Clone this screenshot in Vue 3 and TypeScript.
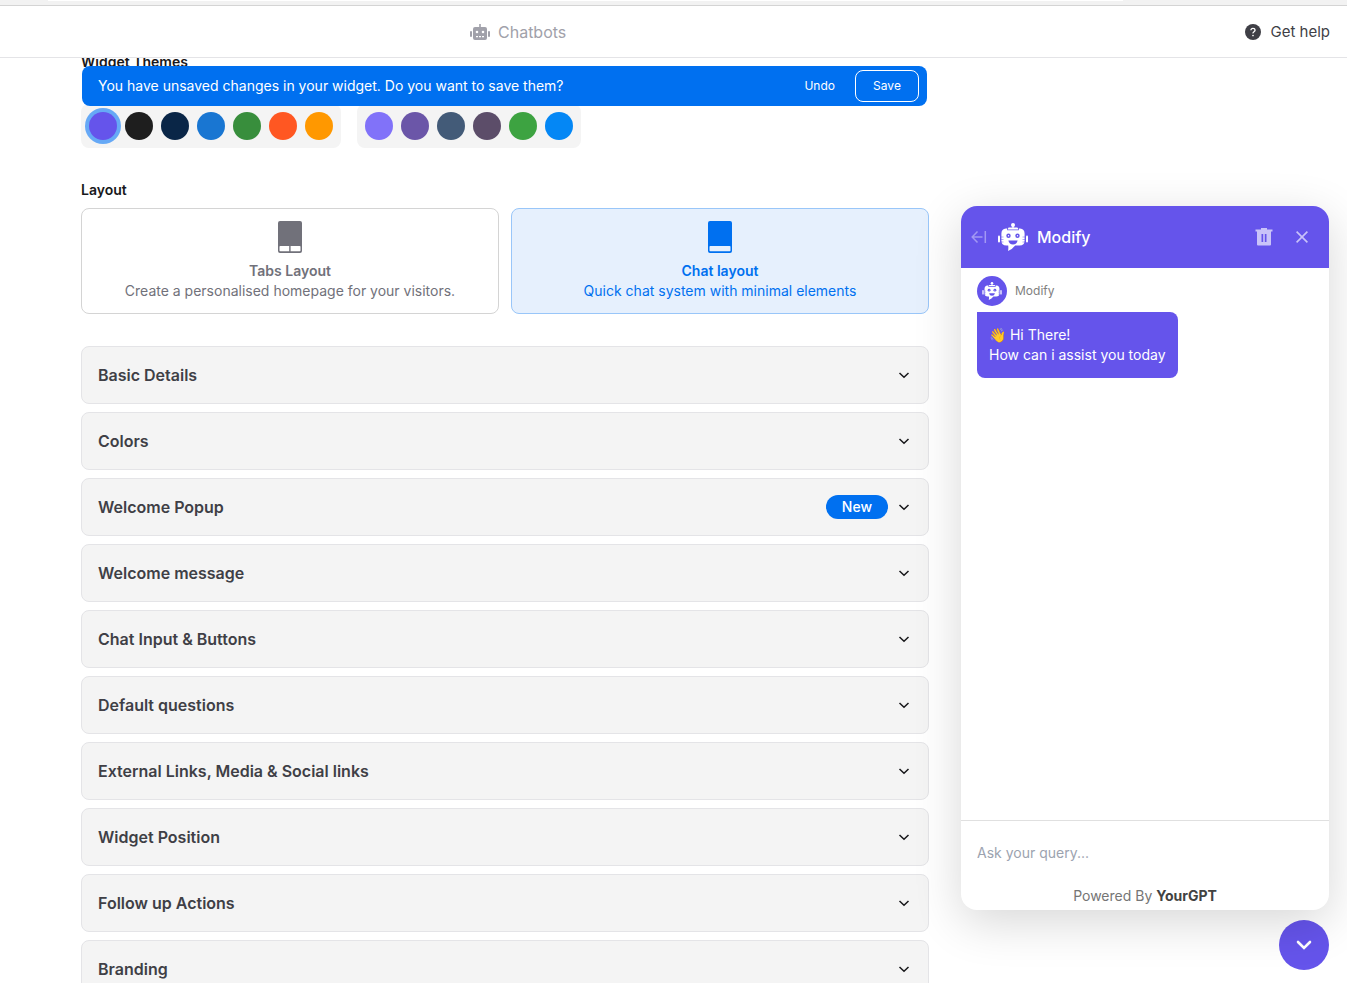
<script setup lang="ts">
import { ref } from 'vue'

interface Theme {
  name: string
  color: string
}

interface Section {
  title: string
  badge?: string
}

const themeGroups: Theme[][] = [
  [
    { name: 'Violet', color: '#6554eb' },
    { name: 'Black', color: '#1e1e1e' },
    { name: 'Navy', color: '#0a2647' },
    { name: 'Blue', color: '#1976d2' },
    { name: 'Green', color: '#388e3c' },
    { name: 'Deep orange', color: '#ff5722' },
    { name: 'Orange', color: '#ff9800' },
  ],
  [
    { name: 'Lavender', color: '#8172f9' },
    { name: 'Purple', color: '#6b56a8' },
    { name: 'Slate', color: '#435b78' },
    { name: 'Plum', color: '#5c4d69' },
    { name: 'Leaf', color: '#3da341' },
    { name: 'Azure', color: '#0487f5' },
  ],
]

const sections: Section[] = [
  { title: 'Basic Details' },
  { title: 'Colors' },
  { title: 'Welcome Popup', badge: 'New' },
  { title: 'Welcome message' },
  { title: 'Chat Input & Buttons' },
  { title: 'Default questions' },
  { title: 'External Links, Media & Social links' },
  { title: 'Widget Position' },
  { title: 'Follow up Actions' },
  { title: 'Branding' },
]

const activeTheme = ref('Violet')
const layout = ref<'tabs' | 'chat'>('chat')
const query = ref('')
</script>

<template>
  <div class="page">
    <svg class="symbols" aria-hidden="true">
      <symbol id="bot" viewBox="0 0 30 28">
        <circle cx="15" cy="2" r="2" fill="currentColor" />
        <path d="M14.4 3h1.2v2h-1.2z" fill="currentColor" />
        <path d="M10 6.4V5.6q0-1.100 1.100-1.100h7.800q1.100 0 1.100 1.100v.8z" fill="currentColor" />
        <path
          d="M8 5.600h1.200v1.600h11.600V5.600H22q4.600.4 4.600 5v6.800q0 5-5 5.200h-4.400q-2.400 3.400-7.200 5.400.6-2.800.2-5.400H8.400q-5-.2-5-5.200v-6.800q0-4.600 4.600-5z"
          fill="currentColor"
        />
        <rect x="0" y="12.500" width="2" height="7" rx="1" fill="currentColor" />
        <rect x="28" y="12.500" width="2" height="7" rx="1" fill="currentColor" />
        <path d="M3 14h2.500M3 16.500h2.500M3 19h2.500M24.500 14H27M24.500 16.500H27M24.500 19H27" stroke="#6554eb" stroke-width=".5" />
        <circle cx="10.500" cy="12.700" r="2.200" fill="#6554eb" />
        <circle cx="19.500" cy="12.700" r="2.200" fill="#6554eb" />
        <circle cx="10.500" cy="12.700" r=".7" fill="currentColor" />
        <circle cx="19.500" cy="12.700" r=".7" fill="currentColor" />
        <path d="M10.400 17.600h9.200q-.8 3.900-4.600 3.900t-4.600-3.900z" fill="#6554eb" />
      </symbol>
    </svg>

    <div class="strip"><div class="strip-tab"></div></div>

    <header class="topbar">
      <a class="crumb" href="#chatbots">
        <svg width="20" height="16" viewBox="0 0 20 16" aria-hidden="true">
          <path
            fill="currentColor"
            fill-rule="evenodd"
            d="M9.200 0h1.600v3H15q2 0 2 2v9q0 2-2 2H5q-2 0-2-2V5q0-2 2-2h4.200zM7 6.700a1.300 1.300 0 1 0 0 2.600 1.300 1.300 0 0 0 0-2.600zm6 0a1.300 1.300 0 1 0 0 2.600 1.300 1.300 0 0 0 0-2.600zM6 12v1.200h2V12zm3 0v1.200h2V12zm3 0v1.200h2V12z"
          />
          <rect x="0" y="7" width="2" height="6" rx="1" fill="currentColor" />
          <rect x="18" y="7" width="2" height="6" rx="1" fill="currentColor" />
        </svg>
        Chatbots
      </a>
      <a class="help" href="#help">
        <svg width="16" height="16" viewBox="0 0 16 16" fill="none" aria-hidden="true">
          <circle cx="8" cy="8" r="8" fill="currentColor" />
          <path d="M5.900 6.200Q6 4.300 8 4.300t2.100 1.800q0 1-1.100 1.700T8 9.300" stroke="#fff" stroke-width="1.300" />
          <circle cx="8" cy="11.500" r=".85" fill="#fff" />
        </svg>
        Get help
      </a>
    </header>

    <main class="workspace">
      <section class="settings">
        <h2 class="label">Widget Themes</h2>
        <div class="banner" role="status">
          <span class="banner-text">You have unsaved changes in your widget. Do you want to save them?</span>
          <button type="button" class="undo">Undo</button>
          <button type="button" class="save">Save</button>
        </div>
        <div class="themes">
          <div v-for="(group, g) in themeGroups" :key="g" class="theme-group">
            <button
              v-for="theme in group"
              :key="theme.name"
              type="button"
              class="swatch"
              :class="{ active: activeTheme === theme.name }"
              :style="{ backgroundColor: theme.color }"
              :aria-label="theme.name"
              :aria-pressed="activeTheme === theme.name"
              @click="activeTheme = theme.name"
            ></button>
          </div>
        </div>

        <h2 class="label layout-label">Layout</h2>
        <div class="layouts">
          <button type="button" class="layout-card" :class="{ selected: layout === 'tabs' }" @click="layout = 'tabs'">
            <svg width="24" height="32" viewBox="0 0 24 32" aria-hidden="true">
              <path
                fill="currentColor"
                fill-rule="evenodd"
                d="M2 0h20q2 0 2 2v28q0 2-2 2H2q-2 0-2-2V2q0-2 2-2zM2.300 25q-.8 0-.8.800v3.600q0 .8.800.800h8.900V25zM12.600 25v5.200h9.100q.8 0 .8-.8v-3.600q0-.8-.8-.8z"
              />
            </svg>
            <strong>Tabs Layout</strong>
            <span>Create a personalised homepage for your visitors.</span>
          </button>
          <button type="button" class="layout-card" :class="{ selected: layout === 'chat' }" @click="layout = 'chat'">
            <svg width="24" height="32" viewBox="0 0 24 32" aria-hidden="true">
              <path
                fill="currentColor"
                fill-rule="evenodd"
                d="M2 0h20q2 0 2 2v28q0 2-2 2H2q-2 0-2-2V2q0-2 2-2zM2.300 25q-.8 0-.8.800v3.600q0 .8.800.800h19.400q.8 0 .8-.8v-3.600q0-.8-.8-.8z"
              />
            </svg>
            <strong>Chat layout</strong>
            <span>Quick chat system with minimal elements</span>
          </button>
        </div>

        <div class="sections">
          <button v-for="section in sections" :key="section.title" type="button" class="section" aria-expanded="false">
            <span class="section-title">{{ section.title }}</span>
            <span v-if="section.badge" class="badge">{{ section.badge }}</span>
            <svg width="16" height="16" viewBox="0 0 16 16" fill="none" aria-hidden="true">
              <path d="m3.500 6 4.500 4.300L12.500 6" stroke="#18181b" stroke-width="1.500" />
            </svg>
          </button>
        </div>
      </section>

      <aside class="preview">
        <div class="widget">
          <div class="widget-head">
            <button type="button" class="icon-button" aria-label="Back">
              <svg width="16" height="16" viewBox="0 0 16 16" fill="none" stroke="currentColor" stroke-width="1.500" aria-hidden="true">
                <path d="M6.500 2.500 1.200 8l5.300 5.500M1.200 8h10.300M14.300 2v12" />
              </svg>
            </button>
            <svg class="head-bot" width="30" height="28" aria-hidden="true"><use href="#bot" /></svg>
            <h3>Modify</h3>
            <button type="button" class="icon-button bright" aria-label="Delete conversation">
              <svg width="18" height="18" viewBox="0 0 18 18" aria-hidden="true">
                <path
                  fill="currentColor"
                  fill-rule="evenodd"
                  d="M6 0h6v1.500h5.500v2H16V16.500q0 1-1 1H3q-1 0-1-1V3.500H.5v-2H6zM6.500 6v8h1.700V6zm3.300 0v8h1.700V6z"
                />
              </svg>
            </button>
            <button type="button" class="icon-button bright close" aria-label="Close">
              <svg width="12" height="12" viewBox="0 0 12 12" fill="none" stroke="currentColor" stroke-width="1.600" aria-hidden="true">
                <path d="m.6.6 10.800 10.800M11.400.6.6 11.400" />
              </svg>
            </button>
          </div>
          <div class="messages">
            <div class="sender">
              <span class="avatar">
                <svg width="20" height="18" aria-hidden="true"><use href="#bot" /></svg>
              </span>
              Modify
            </div>
            <p class="bubble">👋 Hi There!<br />How can i assist you today</p>
          </div>
          <div class="composer">
            <input v-model="query" type="text" aria-label="Ask your query" placeholder="Ask your query..." />
            <p class="powered">Powered By <a href="#yourgpt">YourGPT</a></p>
          </div>
        </div>
        <button type="button" class="launcher" aria-label="Minimise chat">
          <svg width="20" height="20" viewBox="0 0 20 20" fill="none" aria-hidden="true">
            <path d="m4 7 6 6 6-6" stroke="#fff" stroke-width="2.600" stroke-linecap="round" />
          </svg>
        </button>
      </aside>
    </main>
  </div>
</template>

<style>
body {
  background: #fff;
}
</style>

<style scoped>
.page {
  display: flex;
  flex-direction: column;
  height: 100vh;
  overflow: hidden;
  font-family: Inter, "Liberation Sans", sans-serif;
  font-size: 14px;
  line-height: 20px;
  color: #18181b;
}

.page * {
  box-sizing: border-box;
}

button,
input {
  margin: 0;
  padding: 0;
  border: 0;
  background: none;
  font: inherit;
  color: inherit;
}

a {
  color: inherit;
  text-decoration: none;
}

h2,
h3,
p {
  margin: 0;
}

svg {
  display: block;
  flex: none;
}

.symbols {
  position: absolute;
  width: 0;
  height: 0;
}

.strip {
  flex: none;
  height: 6px;
  padding: 0 224px 0 48px;
  background: #f2f2f2;
  border-bottom: 1px solid #d4d4d4;
}

.strip-tab {
  height: 1px;
  background: #fff;
}

.topbar {
  display: flex;
  flex: none;
  align-items: center;
  justify-content: space-between;
  height: 52px;
  padding: 0 17px 0 470px;
  border-bottom: 1px solid #e4e4e7;
}

.crumb {
  display: flex;
  align-items: center;
  gap: 8px;
  font-size: 16px;
  color: #a1a1aa;
}

.help {
  display: flex;
  align-items: center;
  gap: 10px;
  font-size: 15px;
  color: #3f3f46;
}

.workspace {
  position: relative;
  display: grid;
  flex: 1;
  grid-template-rows: minmax(0, 1fr);
  grid-template-columns: minmax(0, 1fr) 368px;
  gap: 32px;
  min-height: 0;
  padding: 0 18px 0 81px;
  overflow: hidden;
}

.settings {
  position: relative;
  margin-top: -6px;
}

.label {
  font-size: 14px;
  font-weight: 600;
  line-height: 20px;
}

.layout-label {
  margin-top: 32px;
}

.banner {
  position: absolute;
  top: 14px;
  left: 1px;
  right: 2px;
  display: flex;
  align-items: center;
  height: 40px;
  padding: 0 8px 0 16px;
  border-radius: 8px;
  background: #0070f0;
  color: #fff;
}

.banner-text {
  flex: 1;
}

.undo,
.save {
  height: 32px;
  font-size: 12px;
}

.undo {
  padding: 0 4px;
  margin-right: 16px;
}

.save {
  width: 64px;
  border: 1px solid #fff;
  border-radius: 8px;
}

.themes {
  display: flex;
  gap: 16px;
  padding-top: 32px;
}

.theme-group {
  display: flex;
  gap: 8px;
  padding: 8px;
  border-radius: 8px;
  background: #f4f4f4;
}

.swatch {
  width: 28px;
  height: 28px;
  border-radius: 50%;
}

.swatch.active {
  box-shadow: 0 0 0 4px #66a9f6;
}

.layouts {
  display: grid;
  grid-template-columns: 1fr 1fr;
  gap: 12px;
  margin-top: 8px;
}

.layout-card {
  display: flex;
  flex-direction: column;
  align-items: center;
  padding: 12px;
  border: 1px solid #d4d4d4;
  border-radius: 8px;
  color: #71717a;
}

.layout-card svg {
  margin-bottom: 8px;
}

.layout-card strong {
  font-weight: 600;
}

.layout-card.selected {
  border-color: #99c6f9;
  background: #e6f0fd;
  color: #0070f0;
}

.sections {
  display: flex;
  flex-direction: column;
  gap: 8px;
  margin-top: 32px;
}

.section {
  display: flex;
  align-items: center;
  gap: 8px;
  height: 58px;
  padding: 0 16px;
  border: 1px solid #e4e4e7;
  border-radius: 8px;
  background: #f4f4f4;
  text-align: left;
}

.section-title {
  flex: 1;
  font-size: 16px;
  font-weight: 600;
  color: #3f3f46;
}

.badge {
  padding: 2px 16px;
  border-radius: 12px;
  background: #0070f0;
  color: #fff;
  font-weight: 500;
}

.preview {
  display: flex;
  flex-direction: column;
  align-items: flex-end;
  gap: 10px;
  min-height: 0;
  padding: 148px 0 13px;
}

.widget {
  z-index: 1;
  display: flex;
  flex: 1;
  flex-direction: column;
  width: 100%;
  min-height: 0;
  border-radius: 16px;
  background: #fff;
  box-shadow: 0 12px 48px rgba(0, 0, 0, 0.16);
}

.widget-head {
  display: flex;
  align-items: center;
  height: 62px;
  padding: 0 21px 0 10px;
  border-radius: 16px 16px 0 0;
  background: #6554eb;
  color: #fff;
}

.icon-button {
  color: #a298f3;
}

.icon-button.bright {
  color: #c9c3f9;
}

.close {
  margin-left: 23px;
}

.head-bot {
  margin: 0 9px 0 11px;
}

.widget-head h3 {
  flex: 1;
  font-size: 16px;
  font-weight: 500;
}

.messages {
  display: flex;
  flex: 1;
  flex-direction: column;
  align-items: flex-start;
  gap: 6px;
  padding: 8px 16px;
}

.sender {
  display: flex;
  align-items: center;
  gap: 8px;
  font-size: 12px;
  color: #808080;
}

.avatar {
  display: flex;
  align-items: center;
  justify-content: center;
  width: 30px;
  height: 30px;
  border-radius: 50%;
  background: #6554eb;
  color: #fff;
}

.bubble {
  padding: 13px 12px;
  border-radius: 0 8px 8px 8px;
  background: #6554eb;
  color: #fff;
}

.composer {
  border-top: 1px solid #e0e0e0;
}

.composer input {
  display: block;
  width: 100%;
  height: 62px;
  padding: 0 16px;
  outline: none;
}

.composer input::placeholder {
  color: #9ca3af;
  opacity: 1;
}

.powered {
  padding: 3px 0 4px;
  text-align: center;
  color: #757575;
}

.powered a {
  font-weight: 700;
  color: #424242;
}

.launcher {
  display: flex;
  flex: none;
  align-items: center;
  justify-content: center;
  width: 50px;
  height: 50px;
  border-radius: 50%;
  background: #6554eb;
}
</style>
